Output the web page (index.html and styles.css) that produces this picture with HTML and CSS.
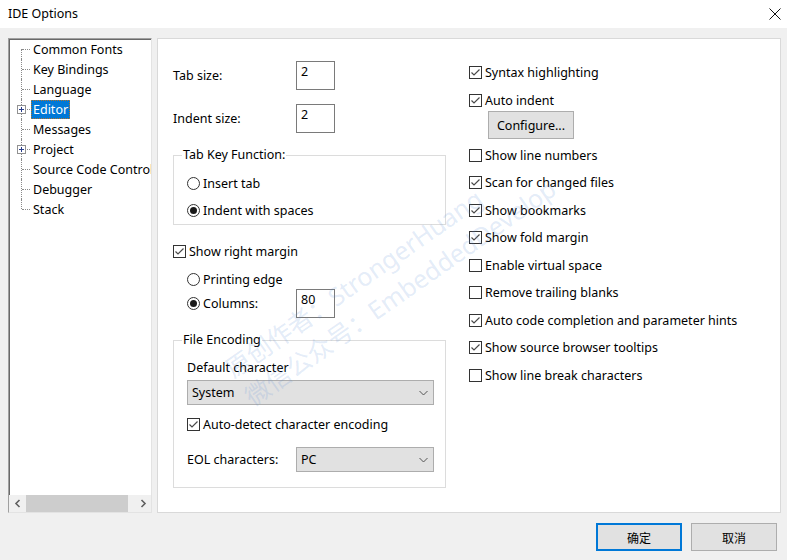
FILE: index.html
```html
<!DOCTYPE html>
<html>
<head>
<meta charset="utf-8">
<link rel="stylesheet" href="styles.css">
</head>
<body>
<div class="window">
  <div class="titlebar">
    <span class="title">IDE Options</span>
    <svg class="close" width="12" height="12" viewBox="0 0 12 12"><path d="M0.5 0.5 L11.5 11.5 M11.5 0.5 L0.5 11.5" stroke="#111" stroke-width="1" fill="none"/></svg>
  </div>

  <div class="content">
    <div class="tree">
      <ul class="tree-list">
        <li class="node first"><span class="gutter"></span><span class="label">Common Fonts</span></li>
        <li class="node"><span class="gutter"></span><span class="label">Key Bindings</span></li>
        <li class="node"><span class="gutter"></span><span class="label">Language</span></li>
        <li class="node"><span class="gutter"><span class="expander"></span></span><span class="label selected">Editor</span></li>
        <li class="node"><span class="gutter"></span><span class="label">Messages</span></li>
        <li class="node"><span class="gutter"><span class="expander"></span></span><span class="label">Project</span></li>
        <li class="node"><span class="gutter"></span><span class="label">Source Code Control</span></li>
        <li class="node"><span class="gutter"></span><span class="label">Debugger</span></li>
        <li class="node last"><span class="gutter"></span><span class="label">Stack</span></li>
      </ul>
      <div class="hscroll">
        <span class="sb-btn"><svg width="8" height="9" viewBox="0 0 8 9"><path d="M5.5 1 L2 4.5 L5.5 8" stroke="#606060" stroke-width="1.6" fill="none"/></svg></span>
        <span class="sb-track"><span class="sb-thumb"></span></span>
        <span class="sb-btn"><svg width="8" height="9" viewBox="0 0 8 9"><path d="M2.5 1 L6 4.5 L2.5 8" stroke="#606060" stroke-width="1.6" fill="none"/></svg></span>
      </div>
    </div>

    <div class="panel">
      <div class="col-left">
        <div class="field-row r-tab"><span class="flabel">Tab size:</span><span class="textbox">2</span></div>
        <div class="field-row r-indent"><span class="flabel">Indent size:</span><span class="textbox">2</span></div>

        <fieldset class="group g-tab">
          <legend>Tab Key Function:</legend>
          <div class="opt-row"><span class="radio"></span><span>Insert tab</span></div>
          <div class="opt-row"><span class="radio on"></span><span>Indent with spaces</span></div>
        </fieldset>

        <div class="check-row r-margin"><span class="check on"><svg width="11" height="11" viewBox="0 0 11 11"><path d="M1.5 5.5 L4 8 L9.5 2.5" stroke="#4a4a4a" stroke-width="1.2" fill="none"/></svg></span><span>Show right margin</span></div>
        <div class="check-row r-print indent"><span class="radio"></span><span>Printing edge</span></div>
        <div class="field-row r-cols indent"><span class="radio on"></span><span class="flabel cols">Columns:</span><span class="textbox">80</span></div>

        <fieldset class="group g-enc">
          <legend>File Encoding</legend>
          <div class="check-row r-def">Default character</div>
          <div class="select wide"><span>System</span><svg width="9" height="6" viewBox="0 0 9 6"><path d="M0.5 1 L4.5 5 L8.5 1" stroke="#555" stroke-width="1" fill="none"/></svg></div>
          <div class="check-row r-auto"><span class="check on"><svg width="11" height="11" viewBox="0 0 11 11"><path d="M1.5 5.5 L4 8 L9.5 2.5" stroke="#4a4a4a" stroke-width="1.2" fill="none"/></svg></span><span>Auto-detect character encoding</span></div>
          <div class="eol-row"><span class="flabel eol">EOL characters:</span><div class="select narrow"><span>PC</span><svg width="9" height="6" viewBox="0 0 9 6"><path d="M0.5 1 L4.5 5 L8.5 1" stroke="#555" stroke-width="1" fill="none"/></svg></div></div>
        </fieldset>
      </div>

      <div class="col-right">
        <div class="check-row rr-first"><span class="check on"><svg width="11" height="11" viewBox="0 0 11 11"><path d="M1.5 5.5 L4 8 L9.5 2.5" stroke="#4a4a4a" stroke-width="1.2" fill="none"/></svg></span><span>Syntax highlighting</span></div>
        <div class="check-row rr-second"><span class="check on"><svg width="11" height="11" viewBox="0 0 11 11"><path d="M1.5 5.5 L4 8 L9.5 2.5" stroke="#4a4a4a" stroke-width="1.2" fill="none"/></svg></span><span>Auto indent</span></div>
        <div class="btn configure">Configure...</div>
        <div class="check-list">
          <div class="check-row"><span class="check"></span><span>Show line numbers</span></div>
          <div class="check-row"><span class="check on"><svg width="11" height="11" viewBox="0 0 11 11"><path d="M1.5 5.5 L4 8 L9.5 2.5" stroke="#4a4a4a" stroke-width="1.2" fill="none"/></svg></span><span>Scan for changed files</span></div>
          <div class="check-row"><span class="check on"><svg width="11" height="11" viewBox="0 0 11 11"><path d="M1.5 5.5 L4 8 L9.5 2.5" stroke="#4a4a4a" stroke-width="1.2" fill="none"/></svg></span><span>Show bookmarks</span></div>
          <div class="check-row"><span class="check on"><svg width="11" height="11" viewBox="0 0 11 11"><path d="M1.5 5.5 L4 8 L9.5 2.5" stroke="#4a4a4a" stroke-width="1.2" fill="none"/></svg></span><span>Show fold margin</span></div>
          <div class="check-row"><span class="check"></span><span>Enable virtual space</span></div>
          <div class="check-row"><span class="check"></span><span>Remove trailing blanks</span></div>
          <div class="check-row"><span class="check on"><svg width="11" height="11" viewBox="0 0 11 11"><path d="M1.5 5.5 L4 8 L9.5 2.5" stroke="#4a4a4a" stroke-width="1.2" fill="none"/></svg></span><span>Auto code completion and parameter hints</span></div>
          <div class="check-row"><span class="check on"><svg width="11" height="11" viewBox="0 0 11 11"><path d="M1.5 5.5 L4 8 L9.5 2.5" stroke="#4a4a4a" stroke-width="1.2" fill="none"/></svg></span><span>Show source browser tooltips</span></div>
          <div class="check-row"><span class="check"></span><span>Show line break characters</span></div>
        </div>
      </div>

      <div class="watermark">
        <div>原创作者：StrongerHuang</div>
        <div>微信公众号：EmbeddedDevelop</div>
      </div>
    </div>
  </div>

  <div class="footer">
    <div class="btn dlg default">确定</div>
    <div class="btn dlg">取消</div>
  </div>
</div>
</body>
</html>
```

FILE: styles.css
```css
* { box-sizing: border-box; }
html, body { margin: 0; padding: 0; }
body {
  font-family: "Noto Sans", "Noto Sans CJK SC", sans-serif;
  font-size: 12.5px;
  color: #000;
  background: #f0f0f0;
}
.window {
  width: 787px;
  height: 560px;
  background: #f0f0f0;
  display: flex;
  flex-direction: column;
  overflow: hidden;
}
.titlebar {
  height: 28px;
  background: #fff;
  display: flex;
  align-items: center;
  justify-content: space-between;
  padding: 0 6px 0 8px;
}
.title { font-size: 12.5px; line-height: 16px; }
.close { display: block; margin-top: -1px; }

.content {
  display: flex;
  margin-top: 10px;
  padding-left: 8px;
  gap: 5px;
  height: 475px;
}

/* tree */
.tree {
  width: 144px;
  height: 475px;
  background: #fff;
  border-top: 1px solid #a0a0a0;
  border-left: 1px solid #a0a0a0;
  border-right: 1px solid #e3e3e3;
  border-bottom: 1px solid #e3e3e3;
  box-shadow: inset 1px 1px 0 #696969;
  display: flex;
  flex-direction: column;
  overflow: hidden;
}
.tree-list {
  list-style: none;
  margin: 0;
  padding: 0;
  flex: 1;
  overflow: hidden;
}
.node {
  height: 20px;
  display: flex;
  align-items: center;
  white-space: nowrap;
}
.gutter {
  position: relative;
  width: 22px;
  height: 20px;
  flex: none;
}
.gutter::before {
  content: "";
  position: absolute;
  left: 12px;
  top: 0;
  height: 20px;
  border-left: 1px dotted #8a8a8a;
}
.node.first .gutter::before { top: 10px; height: 10px; }
.node.last .gutter::before { height: 10px; }
.gutter::after {
  content: "";
  position: absolute;
  left: 13px;
  top: 10px;
  width: 8px;
  border-top: 1px dotted #8a8a8a;
}
.expander {
  position: absolute;
  left: 8px;
  top: 6px;
  width: 9px;
  height: 9px;
  border: 1px solid #919191;
  background: #fff
    linear-gradient(#2b3f8c, #2b3f8c) center / 5px 1px no-repeat;
  z-index: 1;
}
.expander::after {
  content: "";
  position: absolute;
  left: 3px;
  top: 1px;
  width: 1px;
  height: 5px;
  background: #2b3f8c;
}
.label {
  padding: 0 2px;
  line-height: 19px;
  height: 19px;
  margin-top: 1px;
}
.label.selected {
  background: #0078d7;
  color: #fff;
  outline: 1px dotted #b5742a;
  outline-offset: -1px;
}

.hscroll {
  height: 17px;
  display: flex;
  background: #f0f0f0;
  flex: none;
}
.sb-btn {
  width: 17px;
  display: flex;
  align-items: center;
  justify-content: center;
}
.sb-track {
  flex: 1;
  display: flex;
  align-items: stretch;
}
.sb-thumb {
  width: 102px;
  background: #cdcdcd;
}

/* panel */
.panel {
  position: relative;
  width: 624px;
  height: 475px;
  background: #fff;
  border: 1px solid #d9d9d9;
  display: flex;
  padding-left: 15px;
  overflow: hidden;
}
.col-left {
  width: 273px;
  flex: none;
  display: flex;
  flex-direction: column;
}
.field-row {
  height: 29px;
  display: flex;
  align-items: center;
}
.flabel { width: 123px; }
.r-tab { margin-top: 22px; }
.r-indent { margin-top: 14px; }
.textbox {
  width: 39px;
  height: 29px;
  border: 1px solid #7a7a7a;
  padding: 2px 0 0 4px;
  line-height: 16px;
  align-self: stretch;
}
.group {
  margin: 0;
  border: 1px solid #dcdcdc;
  padding: 0 0 0 13px;
  min-width: 0;
}
.group legend {
  padding: 0 1px;
  line-height: 18px;
  height: 18px;
  margin-left: -5px;
}
.g-tab { margin-top: 13px; padding-top: 6px; padding-bottom: 0; }
.opt-row {
  height: 27px;
  display: flex;
  align-items: center;
  gap: 3px;
}
.radio {
  width: 13px;
  height: 13px;
  border: 1px solid #333;
  border-radius: 50%;
  flex: none;
  display: flex;
  align-items: center;
  justify-content: center;
  background: #fff;
}
.radio.on::after {
  content: "";
  width: 7px;
  height: 7px;
  border-radius: 50%;
  background: #1a1a1a;
}
.check {
  width: 13px;
  height: 13px;
  border: 1px solid #333;
  flex: none;
  background: #fff;
  display: flex;
  align-items: center;
  justify-content: center;
}
.check svg { display: block; }
.check-row {
  height: 20px;
  display: flex;
  align-items: center;
  gap: 3px;
  white-space: nowrap;
}
.indent { padding-left: 14px; }
.r-margin { margin-top: 16px; }
.r-print { margin-top: 8px; }
.r-cols { gap: 3px; }
.flabel.cols { width: 90px; }
.g-enc { margin-top: 13px; padding-top: 8px; padding-bottom: 15px; padding-right: 11px; }
.select {
  height: 25px;
  background: #e1e1e1;
  border: 1px solid #adadad;
  display: flex;
  align-items: center;
  justify-content: space-between;
  padding: 0 5px 0 4px;
}
.select.wide { margin-top: 3px; }
.select.narrow { width: 138px; }
.r-auto { margin-top: 9px; }
.eol-row {
  margin-top: 13px;
  display: flex;
  align-items: center;
}
.flabel.eol { width: 109px; }

.col-right {
  margin-left: 23px;
  display: flex;
  flex-direction: column;
  align-items: flex-start;
}
.rr-first { margin-top: 23px; }
.rr-second { margin-top: 8px; }
.btn {
  background: #e1e1e1;
  border: 1px solid #adadad;
  display: flex;
  align-items: center;
  justify-content: center;
}
.configure {
  width: 86px;
  height: 28px;
  margin-top: 1px;
  margin-left: 19px;
}
.check-list {
  margin-top: 6px;
  display: flex;
  flex-direction: column;
  gap: 7.5px;
}

.watermark {
  position: absolute;
  left: 60px;
  top: 318px;
  transform: rotate(-35deg);
  transform-origin: 0 0;
  font-size: 25px;
  line-height: 34px;
  color: rgba(90, 140, 215, 0.18);
  white-space: nowrap;
  pointer-events: none;
}

.footer {
  flex: 1;
  display: flex;
  justify-content: flex-end;
  align-items: flex-start;
  gap: 9px;
  padding: 10px 10px 0 0;
}
.dlg {
  width: 86px;
  height: 28px;
  font-family: "Noto Sans CJK SC", sans-serif;
  font-size: 12px;
}
.dlg.default { border: 2px solid #0078d7; }
```
